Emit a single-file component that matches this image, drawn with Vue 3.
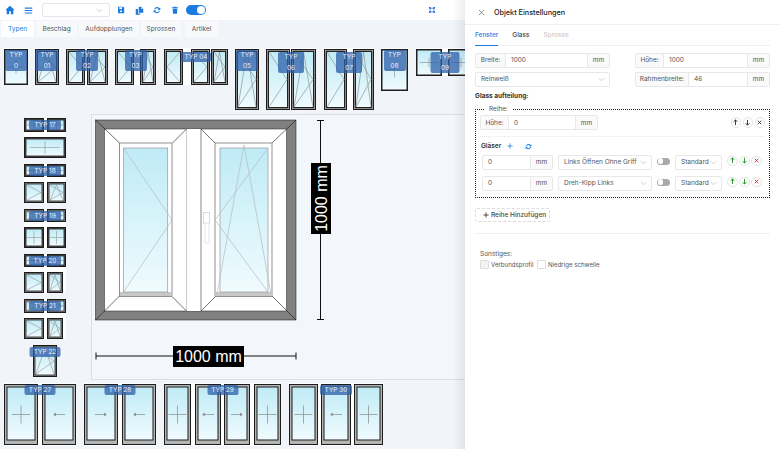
<script setup>
const p = (w, h, t, g = 0) => ({ w, h, t, g })
const one = (x, name, badge, panes) => ({ name, ml: x, badge, rows: [{ mt: 0, panes }] })
const top = [
  one(4, 'TYP 0', 22, [p(24, 36, 'fix')]),
  one(7, 'TYP 01', 23, [p(24, 36, 'kl')]),
  one(7, 'TYP 02', 22, [p(19, 36, 'l'), p(21, 36, 'kl', 2)]),
  one(7, 'TYP 03', 22, [p(19, 36, 'l'), p(16, 36, 'kl', 6)]),
  one(8, 'TYP 04', 30, [p(19, 36, 'r'), p(19, 36, 'l', 8), p(17, 36, 'kl', 1)]),
  one(7, 'TYP 05', 22, [p(24, 61, 'kl')]),
  one(7, 'TYP 06', 26, [p(24, 61, 'l'), p(25, 61, 'kl', 1)]),
  one(8, 'TYP 07', 26, [p(23, 61, 'l'), p(21, 61, 'kl', 6)]),
  one(7, 'TYP 08', 22, [p(27, 42, 'fix')]),
  one(8, 'TYP 09', 29, [p(26, 27, 'fix'), p(26, 27, 'fix', 6)])
]
const pair = (name, w, h, t1, t2, a, b, c, d) => ({
  name,
  ml: 0,
  badge: 32,
  rows: [
    { mt: 0, panes: [p(w, h, t1), p(w - 1, h, t1, 3)] },
    { mt: 5, panes: c === 0 ? [p(42, d, t2)] : [p(a, d, t2), p(b, d, c, 3)] }
  ]
})
const side = [
  pair('TYP 17', 20, 14, 'fix', 'fix', 0, 0, 0, 21),
  pair('TYP 18', 20, 13, 'fix', 'l', 20, 19, 'kl', 21),
  pair('TYP 19', 20, 13, 'l', 'fix', 20, 19, 'fix', 21),
  pair('TYP 20', 20, 13, 'fix', 'l', 20, 16, 'kl', 21),
  pair('TYP 21', 20, 14, 'l', 'l', 20, 16, 'kl', 21)
]
const side22 = { name: 'TYP 22', ml: 9, badge: 31, rows: [{ mt: 0, panes: [p(24, 32, 'kl')] }] }
const bottom = [
  one(4, 'TYP 27', 31, [p(34, 61, 'fix'), p(34, 61, 'al', 4)]),
  one(8, 'TYP 28', 31, [p(34, 61, 'ar'), p(34, 61, 'al', 4)]),
  one(8, 'TYP 29', 31, [p(27, 61, 'fix'), p(26, 61, 'al', 4), p(26, 61, 'ar', 3), p(27, 61, 'fix', 4)]),
  one(8, 'TYP 30', 32, [p(29, 61, 'fix'), p(30, 61, 'al', 3), p(29, 61, 'fix', 3)])
]
const glasses = [{ name: 'Links Öffnen Ohne Griff' }, { name: 'Dreh-Kipp Links' }]
const thumbs = { top, side, bottom }
const stripId = 'glass'
const inset = (q) => (q.t === 'fix' ? 1.5 : 3)
const frame = (q) => (q.t === 'fix' ? '#4a4a4a' : '#8a8a8a')
</script>

<template>
  <div class="page">
    <svg width="0" height="0" class="defs">
      <defs>
        <linearGradient :id="stripId" x1="0" y1="0" x2="0" y2="1">
          <stop offset="0" stop-color="#bfebf6" />
          <stop offset="1" stop-color="#f0fbfe" />
        </linearGradient>
      </defs>
    </svg>

    <main class="left">
      <header class="toolbar">
        <svg class="ico home" viewBox="0 0 12 12"><path d="M6 1 .5 6H2v5h3V7.500h2V11h3V6h1.500z" /></svg>
        <svg class="ico menu" viewBox="0 0 12 12"><path d="M1 2h10v1.500H1zM1 5.200h10v1.500H1zM1 8.500h10V10H1z" /></svg>
        <div class="tool-select"><svg class="chev" viewBox="0 0 8 8"><path d="m1 2.500 3 3 3-3" /></svg></div>
        <svg class="ico save" viewBox="0 0 12 12"><path fill-rule="evenodd" d="M1.500 1H9l1.800 1.800V11H1.500zM3.500 2v2.500h4V2zM6 6.500a1.500 1.500 0 1 0 0 3 1.500 1.500 0 0 0 0-3z" /></svg>
        <svg class="ico copy" viewBox="0 0 12 12"><path d="M5 1h3v3h3v5H5zM1 4h3v6h3v1.500H1zM8.600 1 11 3.400H8.600z" /></svg>
        <svg class="ico sync" viewBox="0 0 12 12"><path d="M6 1.500a4.500 4.500 0 0 1 3.700 2L11 2.300V6H7.300l1.200-1.300A3 3 0 0 0 3.200 5H1.700A4.500 4.500 0 0 1 6 1.500zM1 6.500h3.700L3.500 7.800A3 3 0 0 0 8.800 7h1.500a4.500 4.500 0 0 1-8 2L1 10.200z" /></svg>
        <svg class="ico trash" viewBox="0 0 12 12"><path d="M4.500 1h3l.5 1h2.500v1.200h-9V2H4zM2.500 4h7L9 11.500H3z" /></svg>
        <span class="switch on"><i></i></span>
        <svg class="scan" viewBox="0 0 8 8"><path d="M0 0h2v1h4V0h2v2H7v4h1v2H6V7H2v1H0V6h1V2H0zm2 2v4h4V2z" /></svg>
      </header>

      <nav class="tabs">
        <span class="tab active">Typen</span>
        <span class="tab t2">Beschlag</span>
        <span class="tab t3">Aufdopplungen</span>
        <span class="tab t4">Sprossen</span>
        <span class="tab t5">Artikel</span>
      </nav>

      <section class="strip top-strip">
        <div v-for="t in thumbs.top" :key="t.name" class="thumb" :style="{ marginLeft: t.ml + 'px' }">
          <div v-for="(r, ri) in t.rows" :key="ri" class="pane-row" :style="{ marginTop: r.mt + 'px' }">
            <svg v-for="(q, i) in r.panes" :key="i" class="pane" :width="q.w" :height="q.h" :viewBox="`0 0 ${q.w} ${q.h}`" :style="{ marginLeft: q.g + 'px' }">
              <rect x=".5" y=".5" :width="q.w - 1" :height="q.h - 1" :fill="frame(q)" stroke="#1c1c1c" />
              <path v-if="q.t !== 'fix'" :d="`M1 1 4 4M${q.w - 1} 1l-3 3M1 ${q.h - 1}l3-3M${q.w - 1} ${q.h - 1}l-3-3`" stroke="#ddd" stroke-width=".5" />
              <rect :x="inset(q) - .5" :y="inset(q) - .5" :width="q.w - 2 * inset(q) + 1" :height="q.h - 2 * inset(q) + 1" fill="url(#glass)" stroke="#222" />
              <g fill="none" stroke="#8f9596" stroke-width=".7">
                <path v-if="q.t === 'fix'" :d="`M${q.w * .15} ${q.h * .5}H${q.w * .85}M${q.w / 2} ${q.h * .32}V${q.h * .68}`" />
                <path v-if="q.t === 'l' || q.t === 'kl'" :d="`M3 3 ${q.w - 3} ${q.h / 2} 3 ${q.h - 3}`" />
                <path v-if="q.t === 'r'" :d="`M${q.w - 3} 3 3 ${q.h / 2} ${q.w - 3} ${q.h - 3}`" />
                <path v-if="q.t === 'kl'" :d="`M3 ${q.h - 3} ${q.w / 2} 3 ${q.w - 3} ${q.h - 3}`" />
              </g>
            </svg>
          </div>
          <span class="badge" :class="{ wrap: t.badge < 30, low: t.badge >= 26 }" :style="{ width: t.badge + 'px' }">{{ t.name }}</span>
        </div>
      </section>

      <section class="middle">
        <aside class="side">
          <div v-for="t in [...thumbs.side, side22]" :key="t.name" class="thumb side-thumb" :style="{ marginLeft: t.ml + 'px' }">
            <div v-for="(r, ri) in t.rows" :key="ri" class="pane-row" :style="{ marginTop: r.mt + 'px' }">
              <svg v-for="(q, i) in r.panes" :key="i" class="pane" :width="q.w" :height="q.h" :viewBox="`0 0 ${q.w} ${q.h}`" :style="{ marginLeft: q.g + 'px' }">
                <rect x=".5" y=".5" :width="q.w - 1" :height="q.h - 1" :fill="frame(q)" stroke="#1c1c1c" />
                <rect x="2" y="2" :width="q.w - 4" :height="q.h - 4" fill="url(#glass)" stroke="#222" stroke-width=".8" />
                <g fill="none" stroke="#8f9596" stroke-width=".6">
                  <path v-if="q.t === 'fix'" :d="`M${q.w * .15} ${q.h * .5}H${q.w * .85}M${q.w / 2} ${q.h * .2}V${q.h * .8}`" />
                  <path v-if="q.t === 'l' || q.t === 'kl'" :d="`M3 3 ${q.w - 3} ${q.h / 2} 3 ${q.h - 3}`" />
                  <path v-if="q.t === 'kl'" :d="`M3 ${q.h - 3} ${q.w / 2} 3 ${q.w - 3} ${q.h - 3}`" />
                </g>
              </svg>
            </div>
            <span class="badge side-badge" :style="{ width: t.badge + 'px' }">{{ t.name }}</span>
          </div>
        </aside>
        <div class="canvas">
          <svg class="drawing" width="373" height="264" viewBox="92 115 373 264">
            <rect x="95.500" y="120" width="200.500" height="200" fill="#808080" stroke="#111" stroke-width=".5" />
            <rect x="104.500" y="129" width="182" height="182" fill="#fff" stroke="#222" stroke-width=".5" />
            <rect x="186.500" y="129" width="14.500" height="182" fill="#fff" />
            <path d="M186.500 129v182" stroke="#bbb" stroke-width=".8" />
            <path d="M201 129v182" stroke="#aaa" stroke-width="1.400" />
            <path d="M95.500 120 119.500 143M296 120 272 143M95.500 320l24-24M296 320l-24-24M186.500 129l-14 14M186.500 311l-14-14M201 129l14 14M201 311l14-14" stroke="#111" stroke-width=".6" />
            <rect x="119.500" y="143" width="52.500" height="153.500" fill="#fff" stroke="#777" stroke-width=".8" />
            <rect x="215" y="143" width="57" height="153.500" fill="#fff" stroke="#777" stroke-width=".8" />
            <rect x="120" y="292" width="52" height="4" fill="#c8c8c8" />
            <rect x="215.500" y="292" width="56" height="4" fill="#c8c8c8" />
            <rect x="123.500" y="148" width="44.200" height="144" fill="url(#glass)" stroke="#999" stroke-width=".7" />
            <rect x="220" y="148" width="48" height="144" fill="url(#glass)" stroke="#999" stroke-width=".7" />
            <g fill="none" stroke="#b5bcc0" stroke-width=".7">
              <path d="M123.500 148 172 220 123.500 292" />
              <path d="M268 148 215 220 268 292" />
              <path d="M217 294 244 145 271 294" />
            </g>
            <rect x="203.500" y="212.500" width="6" height="11" fill="#fff" stroke="#ccc" stroke-width=".7" />
            <rect x="205" y="223" width="4" height="20" fill="#fff" stroke="#ddd" stroke-width=".7" />
            <g stroke="#111" stroke-width="1" fill="none">
              <path d="M320.500 120v200M317 120.500h7M317 319.500h7" />
              <path d="M96 356h200M96 352.500v7M296 352.500v7" />
            </g>
            <rect x="311" y="163" width="20" height="71" fill="#000" />
            <rect x="173" y="346" width="71" height="21" fill="#000" />
            <text class="dim" x="208.500" y="362" text-anchor="middle">1000 mm</text>
            <text class="dim" transform="translate(326.500 198.500) rotate(-90)" text-anchor="middle">1000 mm</text>
          </svg>
        </div>
      </section>

      <section class="strip bottom-strip">
        <div v-for="t in thumbs.bottom" :key="t.name" class="thumb" :style="{ marginLeft: t.ml + 'px' }">
          <div class="pane-row">
            <svg v-for="(q, i) in t.rows[0].panes" :key="i" class="pane" :width="q.w" :height="q.h" :viewBox="`0 0 ${q.w} ${q.h}`" :style="{ marginLeft: q.g + 'px' }">
              <rect x=".5" y=".5" :width="q.w - 1" :height="q.h - 1" fill="#b4b4b4" stroke="#1c1c1c" />
              <rect x="3" y="3" :width="q.w - 6" :height="q.h - 8" fill="url(#glass)" stroke="#1c1c1c" />
              <g fill="none" stroke="#8f9596" stroke-width=".8">
                <path v-if="q.t === 'fix'" :d="`M${q.w / 2 - 9} ${q.h / 2}h18M${q.w / 2} ${q.h / 2 - 9}v18`" />
                <path v-if="q.t === 'al'" :d="`M${q.w / 2 + 6} ${q.h / 2}h-10`" />
                <path v-if="q.t === 'ar'" :d="`M${q.w / 2 - 6} ${q.h / 2}h10`" />
              </g>
              <path v-if="q.t === 'al'" :d="`M${q.w / 2 - 6} ${q.h / 2}l3-2v4z`" fill="#8f9596" />
              <path v-if="q.t === 'ar'" :d="`M${q.w / 2 + 6} ${q.h / 2}l-3-2v4z`" fill="#8f9596" />
            </svg>
          </div>
          <span class="badge" :style="{ width: t.badge + 'px' }">{{ t.name }}</span>
        </div>
      </section>
    </main>

    <aside class="panel">
      <header class="panel-head">
        <svg class="close" viewBox="0 0 8 8"><path d="m1 1 6 6M7 1 1 7" /></svg>
        <h1>Objekt Einstellungen</h1>
      </header>

      <div class="panel-tabs">
        <span class="ptab active">Fenster</span>
        <span class="ptab">Glass</span>
        <span class="ptab disabled">Sprosse</span>
      </div>

      <div class="form-row first">
        <div class="group"><span class="addon a-breite">Breite:</span><span class="field">1000</span><span class="addon unit">mm</span></div>
        <div class="group"><span class="addon a-hoehe">Höhe:</span><span class="field">1000</span><span class="addon unit">mm</span></div>
      </div>
      <div class="form-row second">
        <div class="group select-box">Reinweiß<svg class="chev" viewBox="0 0 8 8"><path d="m1 2.500 3 3 3-3" /></svg></div>
        <div class="group"><span class="addon a-rahmen">Rahmenbreite:</span><span class="field">46</span><span class="addon unit">mm</span></div>
      </div>

      <h2 class="subtitle">Glass aufteilung:</h2>

      <fieldset class="reihe">
        <legend>Reihe:</legend>
        <div class="reihe-head">
          <div class="group height-group"><span class="addon a-h2">Höhe:</span><span class="field">0</span><span class="addon unit">mm</span></div>
          <div class="actions plain">
            <span class="round"><svg viewBox="0 0 8 8"><path d="M4 7V1M1.800 3.200 4 1l2.200 2.200" /></svg></span>
            <span class="round"><svg viewBox="0 0 8 8"><path d="M4 1v6M1.800 4.800 4 7l2.200-2.200" /></svg></span>
            <span class="round"><svg viewBox="0 0 8 8"><path d="m2 2 4 4M6 2 2 6" /></svg></span>
          </div>
        </div>
        <div class="gl-head">
          <b>Gläser</b>
          <svg class="plus" viewBox="0 0 8 8"><path d="M4 .5v7M.5 4h7" /></svg>
          <svg class="ico sync-sm" viewBox="0 0 12 12"><path d="M6 1.500a4.500 4.500 0 0 1 3.700 2L11 2.300V6H7.300l1.200-1.300A3 3 0 0 0 3.200 5H1.700A4.500 4.500 0 0 1 6 1.500zM1 6.500h3.700L3.500 7.800A3 3 0 0 0 8.800 7h1.500a4.500 4.500 0 0 1-8 2L1 10.200z" /></svg>
        </div>
        <div v-for="g in glasses" :key="g.name" class="gl-row">
          <div class="group gl-size"><span class="field">0</span><span class="addon unit">mm</span></div>
          <div class="group select-box gl-type">{{ g.name }}<svg class="chev" viewBox="0 0 8 8"><path d="m1 2.500 3 3 3-3" /></svg></div>
          <span class="switch small"><i></i></span>
          <div class="group select-box gl-std">Standard<svg class="chev" viewBox="0 0 8 8"><path d="m1 2.500 3 3 3-3" /></svg></div>
          <div class="actions">
            <span class="round green"><svg viewBox="0 0 8 8"><path d="M4 7V1M1.800 3.200 4 1l2.200 2.200" /></svg></span>
            <span class="round green"><svg viewBox="0 0 8 8"><path d="M4 1v6M1.800 4.800 4 7l2.200-2.200" /></svg></span>
            <span class="round red"><svg viewBox="0 0 8 8"><path d="m2 2 4 4M6 2 2 6" /></svg></span>
          </div>
        </div>
      </fieldset>

      <button class="add-row"><svg viewBox="0 0 8 8"><path d="M4 .5v7M.5 4h7" /></svg>Reihe Hinzufügen</button>
      <hr class="rule" />

      <div class="extras">
        <p>Sonstiges:</p>
        <div class="checks">
          <label class="check"><i class="box gray"></i>Verbundsprofil</label>
          <label class="check"><i class="box"></i>Niedrige schwelle</label>
        </div>
      </div>
    </aside>
  </div>
</template>

<style scoped>
.page { display: flex; width: 781px; height: 449px; overflow: hidden; background: #f1f4f9; font-family: Inter, "Noto Sans", sans-serif; color: #444; }
.defs { position: absolute; }
.left { width: 465px; flex: none; overflow: hidden; position: relative; }
.left::after { content: ""; position: absolute; top: 0; right: 0; bottom: 0; width: 12px; background: linear-gradient(to right, rgba(0, 0, 0, 0), rgba(0, 0, 0, .07)); }
.toolbar { height: 20px; background: #fff; display: flex; align-items: center; padding-left: 5px; position: relative; }
.ico { fill: #1c7be0; display: block; }
.home { width: 10px; height: 10px; }
.menu { width: 9px; height: 9px; margin-left: 9px; }
.tool-select { width: 68px; height: 14px; margin-left: 9px; border: 1px solid #e4e6ea; border-radius: 2px; box-sizing: border-box; display: flex; align-items: center; justify-content: flex-end; padding-right: 6px; }
.chev { width: 7px; height: 7px; fill: none; stroke: #bbb; stroke-width: .8; flex: none; }
.save { width: 8px; height: 8px; margin-left: 7px; }
.copy { width: 9px; height: 9px; margin-left: 10px; }
.sync { width: 8px; height: 8px; margin-left: 9px; }
.trash { width: 8px; height: 8px; margin-left: 10px; }
.switch { display: block; border-radius: 6px; position: relative; flex: none; }
.switch i { position: absolute; background: #fff; border-radius: 50%; }
.switch.on { width: 20px; height: 10px; background: #1c7be0; margin-left: 7px; }
.switch.on i { width: 8px; height: 8px; top: 1px; right: 1px; }
.switch.small { width: 13px; height: 7px; background: #aaa; margin: 3px 5px 0; align-self: flex-start; }
.switch.small i { width: 5.500px; height: 5.500px; top: .75px; left: .75px; }
.scan { width: 6px; height: 6px; fill: #1c62e0; position: absolute; left: 429px; top: 7px; }
.tabs { display: flex; height: 18px; padding: 1px 0 0 1px; box-sizing: border-box; gap: 2px; }
.tab { height: 16px; background: #f8f9fa; font-size: 6.500px; line-height: 16px; text-align: center; color: #555; }
.tab.active { width: 33px; background: #fff; color: #1c7be0; }
.t2 { width: 41px; }
.t3 { width: 60px; }
.t4 { width: 40px; }
.t5 { width: 33px; margin-left: 2px; }
.strip { display: flex; align-items: flex-start; }
.top-strip { height: 76px; padding-top: 10px; box-sizing: border-box; }
.top-strip .thumb { padding-top: 1px; }
.thumb { position: relative; background: #fff; flex: none; }
.pane-row { display: flex; }
.pane { display: block; flex: none; }
.badge { position: absolute; top: 4px; left: 50%; transform: translateX(-50%); border-radius: 2px; background: rgba(46, 96, 170, .76); color: #e8effa; font-size: 6.500px; line-height: 10px; text-align: center; }
.badge.wrap { top: 2px; line-height: 10.500px; word-spacing: 30px; }
.badge.wrap.low { top: 4px; }
.middle { display: flex; height: 266px; }
.side { width: 91px; flex: none; padding: 4px 0 0 24px; box-sizing: border-box; display: flex; flex-direction: column; gap: 6px; align-items: flex-start; }
.side-badge { top: 2px; }
.canvas { width: 374px; flex: none; border: 1px solid #dcdfe4; border-right: 0; box-sizing: border-box; background: #f3f6fb; }
.drawing { display: block; }
.dim { font-family: "Liberation Sans", Arial, sans-serif; font-size: 16px; fill: #fff; }
.bottom-strip { padding-top: 3px; }
.bottom-strip .thumb { padding: 1px 0; }
.bottom-strip .badge { top: 2px; }
.panel { width: 316px; flex: none; background: #fff; font-size: 6.500px; position: relative; }
.panel-head { height: 24px; border-bottom: 1px solid #f0f0f0; display: flex; align-items: center; padding-left: 13px; }
.close { width: 7px; height: 7px; fill: none; stroke: #666; stroke-width: .8; margin-right: 9px; }
h1 { margin: 0; font-size: 7.250px; font-weight: 500; color: #222; }
.panel-tabs { margin: 0 11px 0 10px; height: 20px; border-bottom: 1px solid #f0f0f0; display: flex; gap: 14px; font-size: 6.500px; font-weight: 500; line-height: 20px; color: #444; }
.ptab.active { color: #1c7be0; border-bottom: 1px solid #1c7be0; height: 20px; }
.ptab.disabled { color: #ccc; }
.form-row { display: flex; justify-content: space-between; margin: 0 11px 0 10px; }
.form-row.first { margin-top: 7px; }
.form-row.second { margin-top: 4.500px; }
.form-row .group { height: 14.500px; }
.group { width: 135px; height: 15px; display: flex; border: 1px solid #e8e8e8; border-radius: 2px; box-sizing: border-box; align-items: center; color: #555; flex: none; }
.addon { height: 100%; background: #fafafa; display: flex; align-items: center; justify-content: center; border-right: 1px solid #e8e8e8; box-sizing: border-box; flex: none; white-space: nowrap; }
.unit { border-right: 0; border-left: 1px solid #e8e8e8; width: 22px; }
.field { flex: 1; padding-left: 5px; }
.a-breite { width: 30px; }
.a-hoehe { width: 28px; }
.a-rahmen { width: 53px; }
.a-h2 { width: 28px; }
.select-box { justify-content: space-between; padding: 0 4px 0 5px; white-space: nowrap; }
.subtitle { margin: 5px 0 0 10px; font-size: 6.500px; font-weight: 700; color: #333; line-height: 9px; height: 9px; }
.reihe { margin: 4.500px 11px 0 10px; padding: 2px 4px 0; border: 1px dotted #222; box-sizing: border-box; width: 295px; height: 92.500px; min-width: 0; }
.reihe legend { margin-left: 5px; padding: 0 4px; line-height: 8px; height: 8px; color: #555; }
.reihe-head { display: flex; justify-content: space-between; align-items: center; padding-bottom: 5.500px; border-bottom: 1px dotted #e6e6e6; }
.height-group { width: 118px; }
.actions { display: flex; gap: 1.500px; }
.round { width: 10.500px; height: 10.500px; border-radius: 50%; border: 1px solid #e4e4e4; display: flex; align-items: center; justify-content: center; box-sizing: border-box; flex: none; }
.round svg { width: 7px; height: 7px; fill: none; stroke: #222; stroke-width: 1; }
.round.green svg { stroke: #118a11; }
.round.red svg { stroke: #e21f1f; }
.gl-head { display: flex; align-items: center; height: 17px; padding-left: 1px; margin-top: 1px; }
.gl-head b { font-weight: 600; color: #333; }
.plus { width: 6px; height: 6px; fill: none; stroke: #1c7be0; stroke-width: 1; margin-left: 6px; }
.sync-sm { width: 7px; height: 7px; margin-left: 12px; }
.gl-row { display: flex; align-items: flex-start; padding-left: 2px; margin-bottom: 6px; }
.gl-size { width: 71px; }
.gl-type { width: 94px; margin-left: 5px; }
.gl-std { width: 47px; }
.gl-row .actions { margin-left: 5px; margin-top: 1px; }
.add-row { display: flex; align-items: center; width: 75px; height: 14px; margin: 10.500px 0 0 10px; padding: 0 0 0 7px; box-sizing: border-box; border: 1px dashed #ddd; border-radius: 2px; background: #fff; font: 500 6.500px Inter, sans-serif; color: #444; }
.add-row svg { width: 6px; height: 6px; fill: none; stroke: #222; stroke-width: 1; margin-right: 2px; }
.rule { border: 0; border-top: 1px solid #f0f0f0; margin: 11px 11px 0 10px; }
.extras { margin: 16px 0 0 15px; }
.extras p { margin: 0; line-height: 9px; color: #555; }
.checks { display: flex; gap: 3.500px; margin-top: 1px; }
.check { display: flex; align-items: center; gap: 2px; color: #555; white-space: nowrap; font-size: 6.100px; }
.box { width: 7px; height: 7px; border: 1px solid #ddd; border-radius: 1px; display: block; }
.box.gray { background: #f3f3f3; }
</style>
